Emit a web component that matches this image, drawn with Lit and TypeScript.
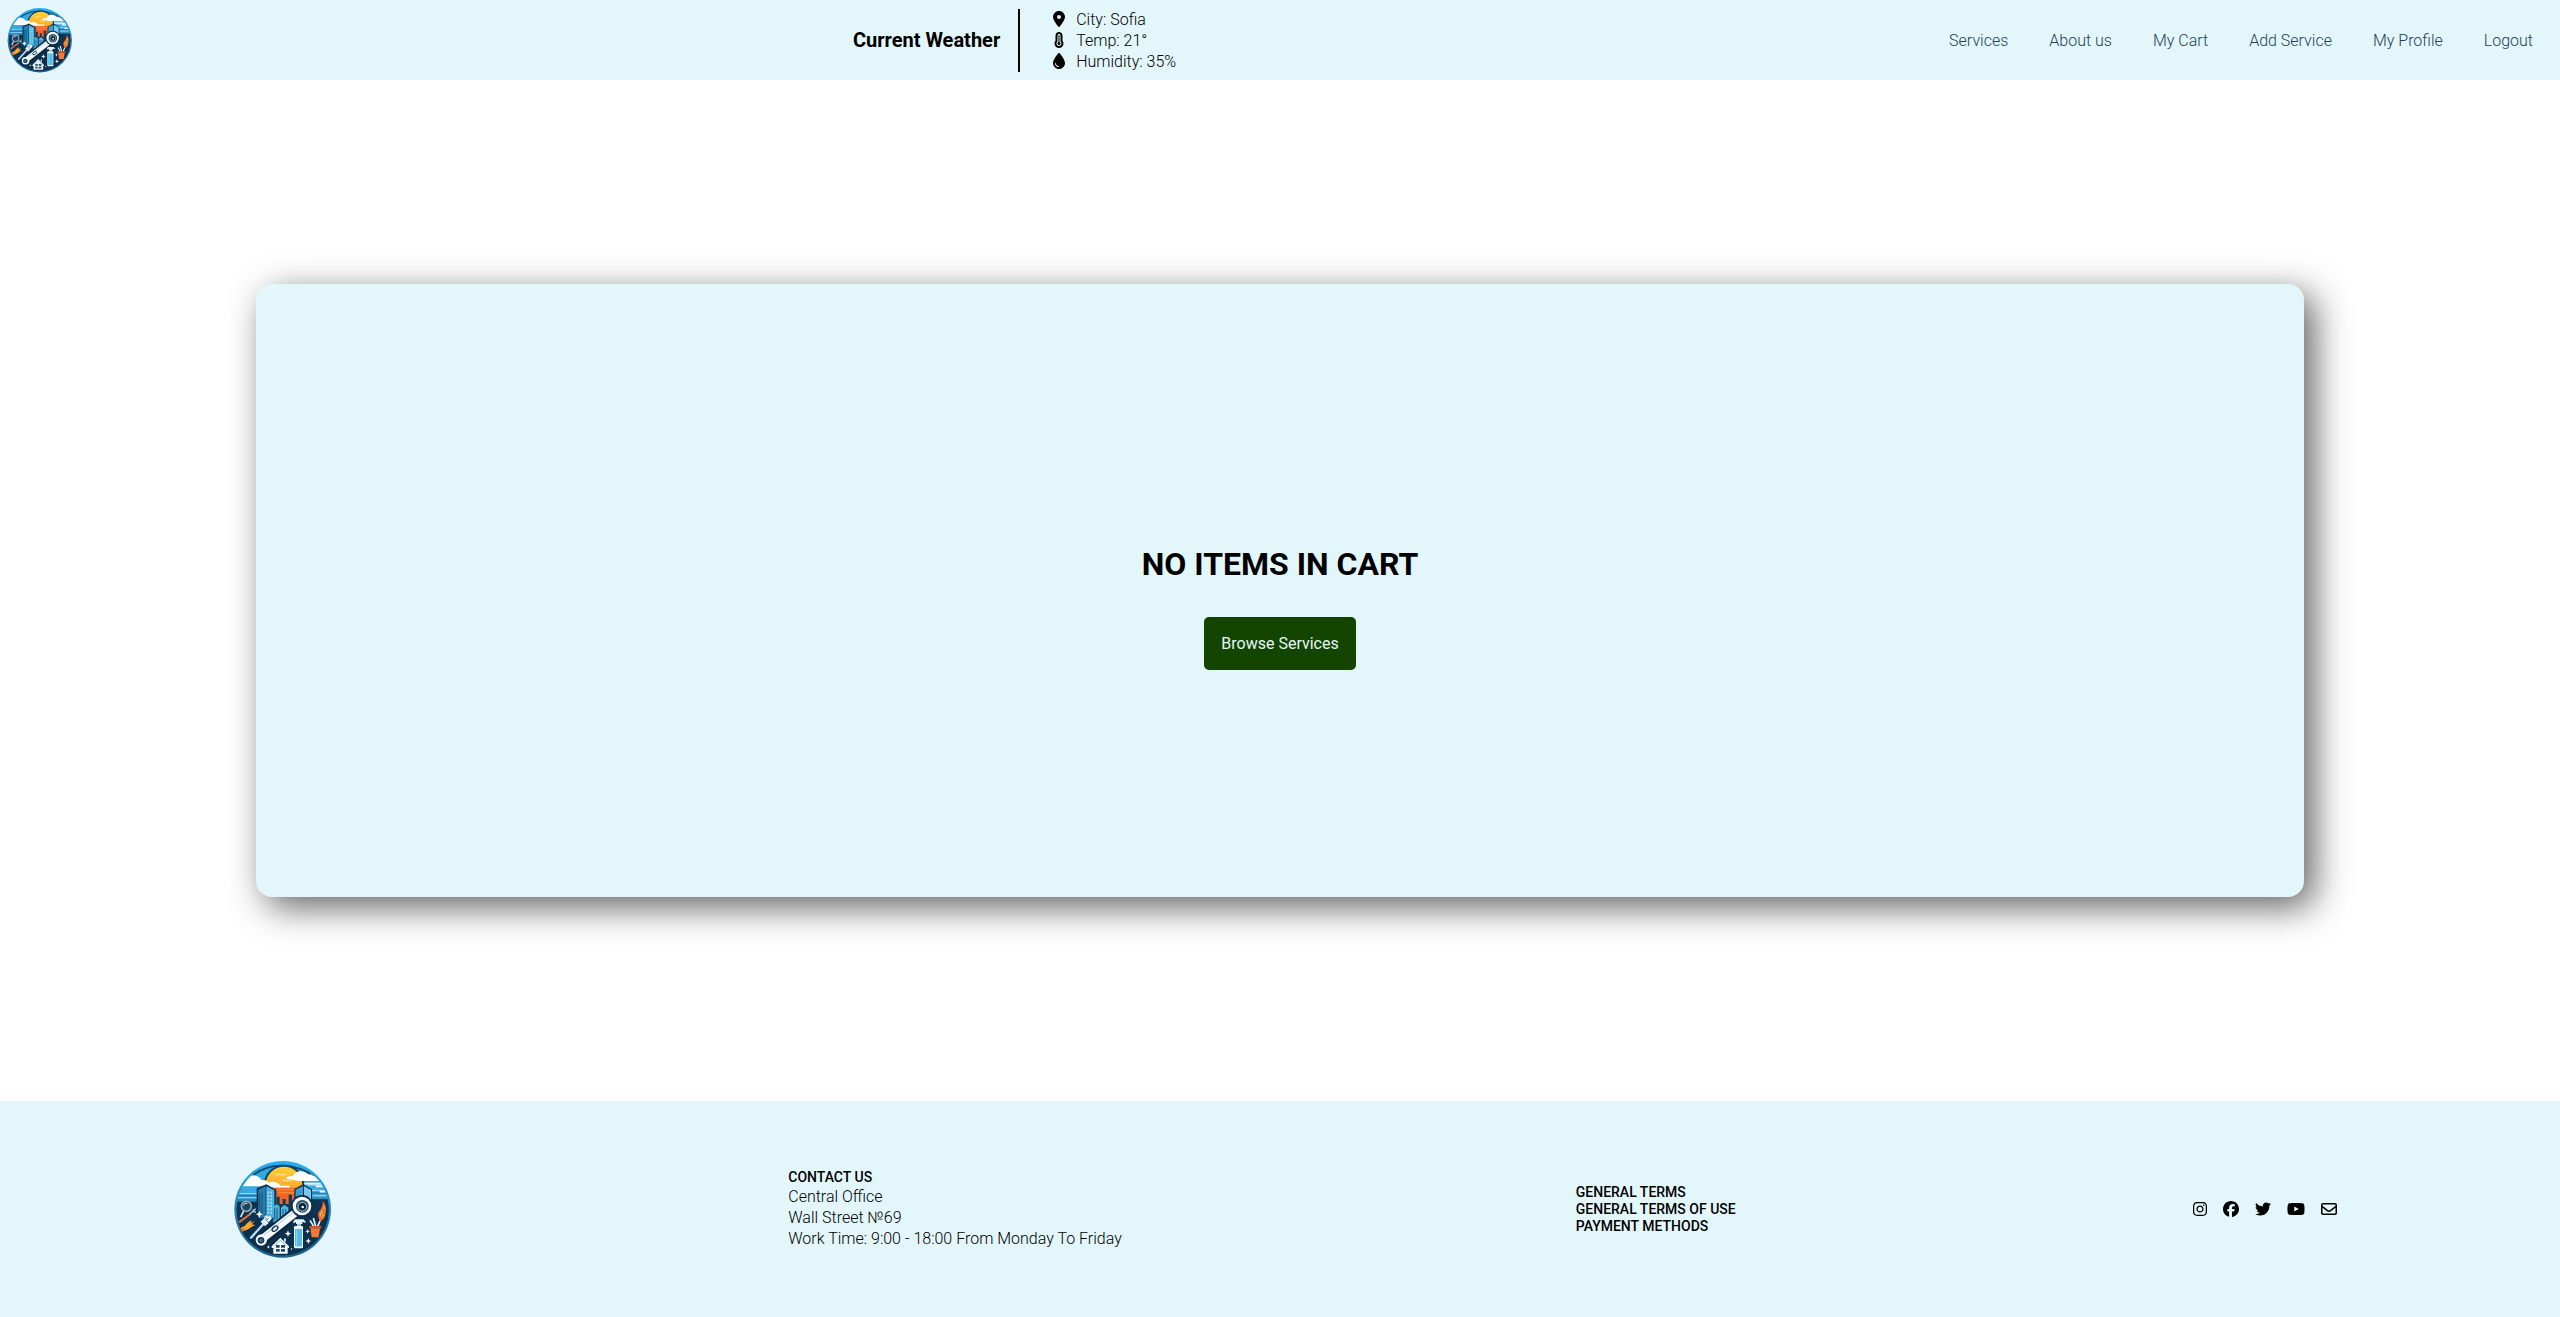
import { LitElement, html, css, svg } from "lit";
import { customElement, property } from "lit/decorators.js";

interface Glyph {
  width: number;
  path: string;
}

const glyphs: Record<string, Glyph> = {
  location: {
    width: 384,
    path: "M215.7 499.2C267 435 384 279.4 384 192C384 86 298 0 192 0S0 86 0 192c0 87.4 117 243 168.3 307.2c12.3 15.3 35.1 15.3 47.4 0zM192 128a64 64 0 1 1 0 128 64 64 0 1 1 0-128z",
  },
  temperature: {
    width: 320,
    path: "M160 64c-26.5 0-48 21.5-48 48l0 164.5c0 17.3-7.1 31.9-15.3 42.5C86.2 332.6 80 349.5 80 368c0 44.2 35.8 80 80 80s80-35.8 80-80c0-18.5-6.2-35.4-16.7-48.9c-8.2-10.6-15.3-25.2-15.3-42.5L208 112c0-26.5-21.5-48-48-48zM48 112C48 50.2 98.1 0 160 0s112 50.1 112 112l0 164.4c0 .1 .1 .3 .2 .6c.2 .6 .8 1.6 1.7 2.8c18.9 24.4 30.1 55 30.1 88.1c0 79.5-64.5 144-144 144S16 447.5 16 368c0-33.2 11.2-63.8 30.1-88.1c.9-1.2 1.5-2.2 1.7-2.8c.1-.3 .2-.5 .2-.6L48 112zM208 368c0 26.5-21.5 48-48 48s-48-21.5-48-48c0-20.9 13.4-38.7 32-45.3L144 112c0-8.8 7.2-16 16-16s16 7.2 16 16l0 210.7c18.6 6.6 32 24.4 32 45.3z",
  },
  droplet: {
    width: 384,
    path: "M192 512C86 512 0 426 0 320C0 228.8 130.2 57.7 166.6 11.7C172.6 4.2 181.5 0 191.1 0l1.8 0c9.6 0 18.5 4.2 24.5 11.7C253.8 57.7 384 228.8 384 320c0 106-86 192-192 192zM96 336c0-8.8-7.2-16-16-16s-16 7.2-16 16c0 61.9 50.1 112 112 112c8.8 0 16-7.2 16-16s-7.2-16-16-16c-44.2 0-80-35.8-80-80z",
  },
  instagram: {
    width: 448,
    path: "M224.1 141c-63.6 0-114.9 51.3-114.9 114.9s51.3 114.9 114.9 114.9S339 319.5 339 255.9 287.7 141 224.1 141zm0 189.6c-41.1 0-74.7-33.5-74.7-74.7s33.5-74.7 74.7-74.7 74.7 33.5 74.7 74.7-33.6 74.7-74.7 74.7zm146.4-194.3c0 14.9-12 26.8-26.8 26.8-14.9 0-26.8-12-26.8-26.8s12-26.8 26.8-26.8 26.8 12 26.8 26.8zm76.1 27.2c-1.7-35.9-9.9-67.7-36.2-93.9-26.2-26.2-58-34.4-93.9-36.2-37-2.1-147.9-2.1-184.9 0-35.8 1.7-67.6 9.9-93.9 36.1s-34.4 58-36.2 93.9c-2.1 37-2.1 147.9 0 184.9 1.7 35.9 9.9 67.7 36.2 93.9s58 34.4 93.9 36.2c37 2.1 147.9 2.1 184.9 0 35.9-1.7 67.7-9.9 93.9-36.2 26.2-26.2 34.4-58 36.2-93.9 2.1-37 2.1-147.8 0-184.8zM398.8 388c-7.8 19.6-22.9 34.7-42.6 42.6-29.5 11.7-99.5 9-132.1 9s-102.7 2.6-132.1-9c-19.6-7.8-34.7-22.9-42.6-42.6-11.7-29.5-9-99.5-9-132.1s-2.6-102.7 9-132.1c7.8-19.6 22.9-34.7 42.6-42.6 29.5-11.7 99.5-9 132.1-9s102.7-2.6 132.1 9c19.6 7.8 34.7 22.9 42.6 42.6 11.7 29.5 9 99.5 9 132.1s2.7 102.7-9 132.1z",
  },
  facebook: {
    width: 512,
    path: "M512 256C512 114.6 397.4 0 256 0S0 114.6 0 256C0 376 82.7 476.8 194.2 504.5V334.2H141.4V256h52.8V222.3c0-87.1 39.4-127.5 125-127.5c16.2 0 44.2 3.2 55.7 6.4V172c-6-.6-16.5-1-29.6-1c-42 0-58.2 15.9-58.2 57.2V256h83.6l-14.4 78.2H287V510.1C413.8 494.8 512 386.9 512 256z",
  },
  twitter: {
    width: 512,
    path: "M459.37 151.716c.325 4.548.325 9.097.325 13.645 0 138.72-105.583 298.558-298.558 298.558-59.452 0-114.68-17.219-161.137-47.106 8.447.974 16.568 1.299 25.34 1.299 49.055 0 94.213-16.568 130.274-44.832-46.132-.975-84.792-31.188-98.112-72.772 6.498.974 12.995 1.624 19.818 1.624 9.421 0 18.843-1.3 27.614-3.573-48.081-9.747-84.143-51.98-84.143-102.985v-1.299c13.969 7.797 30.214 12.67 47.431 13.319-28.264-18.843-46.781-51.005-46.781-87.391 0-19.492 5.197-37.36 14.294-52.954 51.655 63.675 129.3 105.258 216.365 109.807-1.624-7.797-2.599-15.918-2.599-24.04 0-57.828 46.782-104.934 104.934-104.934 30.213 0 57.502 12.67 76.67 33.137 23.715-4.548 46.456-13.32 66.599-25.34-7.798 24.366-24.366 44.833-46.132 57.827 21.117-2.273 41.584-8.122 60.426-16.243-14.292 20.791-32.161 39.308-52.628 54.253z",
  },
  youtube: {
    width: 576,
    path: "M549.655 124.083c-6.281-23.65-24.787-42.276-48.284-48.597C458.781 64 288 64 288 64S117.22 64 74.629 75.486c-23.497 6.322-42.003 24.947-48.284 48.597-11.412 42.867-11.412 132.305-11.412 132.305s0 89.438 11.412 132.305c6.281 23.65 24.787 41.5 48.284 47.821C117.22 448 288 448 288 448s170.78 0 213.371-11.486c23.497-6.321 42.003-24.171 48.284-47.821 11.412-42.867 11.412-132.305 11.412-132.305s0-89.438-11.412-132.305zm-317.51 213.508V175.185l142.739 81.205-142.739 81.201z",
  },
  envelope: {
    width: 512,
    path: "M64 112c-8.8 0-16 7.2-16 16v22.1L220.5 291.7c20.7 17 50.4 17 71.1 0L464 150.1V128c0-8.8-7.2-16-16-16H64zM48 212.2V384c0 8.8 7.2 16 16 16H448c8.8 0 16-7.2 16-16V212.2L322 328.8c-38.4 31.5-93.7 31.5-132 0L48 212.2zM0 128C0 92.7 28.7 64 64 64H448c35.3 0 64 28.7 64 64V384c0 35.3-28.7 64-64 64H64c-35.3 0-64-28.7-64-64V128z",
  },
};

@customElement("app-icon")
class AppIcon extends LitElement {
  @property() name = "";

  static styles = css`
    :host {
      display: block;
      height: 16px;
    }
    .glyph {
      display: block;
      height: 16px;
      width: auto;
      fill: currentColor;
    }
  `;

  render() {
    const glyph = glyphs[this.name];
    return html`<svg class="glyph" viewBox="0 0 ${glyph.width} 512" width=${glyph.width / 32} height="16" aria-hidden="true">
      <path d=${glyph.path}></path>
    </svg>`;
  }
}

const sparkle = (x: number, y: number, r: number) => svg`
  <path fill="#fff" d="M${x} ${y - r}L${x + r * 0.28} ${y - r * 0.28}L${x + r} ${y}L${x + r * 0.28} ${y + r * 0.28}L${x} ${y + r}L${x - r * 0.28} ${y + r * 0.28}L${x - r} ${y}L${x - r * 0.28} ${y - r * 0.28}Z"></path>`;

const windowGrid = (x: number, y: number, cols: number, rows: number) =>
  Array.from({ length: cols * rows }, (_, i) => svg`
    <rect x=${x + (i % cols) * 9} y=${y + Math.floor(i / cols) * 10} width="5" height="6" fill="#a5dcf3"></rect>`);

@customElement("app-logo")
class AppLogo extends LitElement {
  static styles = css`
    :host {
      display: block;
    }
    .art {
      display: block;
      width: 100%;
      height: auto;
    }
  `;

  render() {
    return html`<svg class="art" viewBox="0 0 360 360" role="img" aria-label="Home services">
      <defs>
        <clipPath id="disc"><circle cx="179" cy="181" r="138"></circle></clipPath>
        <linearGradient id="rim" x1="0" y1="0" x2="0" y2="1">
          <stop offset="0" stop-color="#27b0ee"></stop>
          <stop offset="0.45" stop-color="#2b86b9"></stop>
          <stop offset="1" stop-color="#1b5f8c"></stop>
        </linearGradient>
        <linearGradient id="sky" x1="0" y1="0" x2="0" y2="1">
          <stop offset="0" stop-color="#27aae8"></stop>
          <stop offset="0.34" stop-color="#3da9dc"></stop>
          <stop offset="0.55" stop-color="#0f3a5c"></stop>
          <stop offset="1" stop-color="#0c2d49"></stop>
        </linearGradient>
        <linearGradient id="sun" x1="0" y1="0" x2="0" y2="1">
          <stop offset="0" stop-color="#ffd23a"></stop>
          <stop offset="0.6" stop-color="#fca928"></stop>
          <stop offset="1" stop-color="#f06a26"></stop>
        </linearGradient>
      </defs>
      <rect width="360" height="360" fill="#e4f5fc"></rect>
      <circle cx="179" cy="181" r="145" fill="url(#rim)"></circle>
      <g clip-path="url(#disc)">
        <rect x="34" y="36" width="290" height="290" fill="url(#sky)"></rect>
        <path d="M84 84Q124 48 180 50T276 84" fill="none" stroke="#124a72" stroke-width="6"></path>
        <circle cx="183" cy="108" r="61" fill="#0f3f63"></circle>
        <path d="M30 134H110M34 146H104M255 108H330M262 124H330M270 140H330" stroke="#8fd2ee" stroke-width="4"></path>
        <path d="M30 140H106M262 132H330" stroke="#1f78ae" stroke-width="5"></path>
        <path d="M30 158H110L102 330H20ZM262 150H340V330H240Z" fill="#0e3452"></path>
        <path d="M30 152H96M270 149H330" stroke="#2c87b8" stroke-width="4"></path>
        <circle cx="183" cy="108" r="55" fill="url(#sun)"></circle>
        <path d="M132 116H236L222 190H150Z" fill="#f0642a"></path>
        <path d="M160 122H215M166 131H225" stroke="#fb8a2c" stroke-width="4"></path>
        <path d="M158 78q9-6 14 1q7-7 16-1M180 95q8-4 12 1q6-5 13 0" fill="none" stroke="#fff1ba" stroke-width="3"></path>
        <path d="M40 112C50 96 62 98 68 92C78 72 106 76 116 94C126 90 134 96 138 101C150 95 166 100 173 112Z" fill="#fff"></path>
        <path d="M190 86C196 80 204 82 210 82C216 64 244 62 254 76C266 74 272 82 280 84C292 86 298 90 302 96H230C220 96 214 92 190 90Z" fill="#fff"></path>
        <path d="M244 104H300M278 112H310M290 128H320M128 113H200" stroke="#fff" stroke-width="5"></path>
        <path d="M161 143h9v22h9v-15h9v15h9v-28h10v30h12v50h-70v-52h12z" fill="#123a59"></path>
        <path d="M101 118L130 106L160 122V214H101Z" fill="#0d3350"></path>
        <path d="M106 122L128 112V206H106Z" fill="#277eac"></path>
        <path d="M130 112L154 124V206H130Z" fill="#4db1dd"></path>
        <path d="M110 134v62M117 130v68" stroke="#145780" stroke-width="3"></path>
        ${windowGrid(133, 128, 2, 7)}
        <path d="M214 120L240 106L267 121V180H214Z" fill="#0d3350"></path>
        <path d="M218 122L240 111V176H218Z" fill="#3a9fd0"></path>
        <path d="M243 112L264 123V176H243Z" fill="#78c8e8"></path>
        <path d="M151 172L161 166L172 172V224H151Z" fill="#4aaedb"></path>
        <path d="M174 176L184 168L196 176V214H174Z" fill="#56b8e2"></path>
        <path d="M172 166V224" stroke="#0d3350" stroke-width="4"></path>
        <path d="M155 178v34M162 178v34M180 180v24M188 180v24" stroke="#155a85" stroke-width="3"></path>
        <path d="M30 220H106L150 222L200 196L330 206V330H30Z" fill="#0d304c"></path>
        <path d="M53 204L62 186" stroke="#e8eef2" stroke-width="5"></path>
        <circle cx="70" cy="172" r="15" fill="#1a4564" stroke="#8fa8b8" stroke-width="5"></circle>
        <path d="M61 170a10 10 0 0 1 12-7" fill="none" stroke="#d6e6ee" stroke-width="3"></path>
        <path d="M48 220L82 195" stroke="#e8703c" stroke-width="6"></path>
        <path d="M80 196L98 179M90 181l2 7l7 1" fill="none" stroke="#b7cbd7" stroke-width="4"></path>
        <path d="M46 240L66 230C70 224 76 218 86 213L82 221L95 217L86 226L97 228L85 234C76 244 64 242 54 252Z" fill="#ffa52c"></path>
        <path d="M46 246L64 240" stroke="#ed6830" stroke-width="6"></path>
        <path d="M84 266L124 222" stroke="#b9e1f1" stroke-width="7" stroke-linecap="round"></path>
        <path d="M113 218L124 207L137 222L126 232Z" fill="#dceffa"></path>
        <path d="M122 206L130 198L136 204L140 200L147 208L137 220Z" fill="#eef7fb"></path>
        <path d="M126 204l7 8M137 207l-8 8" stroke="#24597b" stroke-width="2"></path>
        <path d="M219 190L115 274" stroke="#082940" stroke-width="36" stroke-linecap="round"></path>
        <path d="M219 190L120 268" stroke="#f5f9fb" stroke-width="23"></path>
        <path d="M215 186L124 258" stroke="#c4d9e4" stroke-width="4"></path>
        <circle cx="115" cy="273" r="17" fill="#f5f9fb"></circle>
        <circle cx="114" cy="274" r="10" fill="#143d5b"></circle>
        <circle cx="114" cy="274" r="5" fill="#417995"></circle>
        <ellipse cx="156" cy="239" rx="10" ry="6" transform="rotate(-39 156 239)" fill="#e5f1f7" stroke="#143d5b" stroke-width="4"></ellipse>
        <circle cx="237" cy="171" r="33" fill="#0c2d49"></circle>
        <circle cx="237" cy="171" r="28" fill="#f7fafc"></circle>
        <circle cx="238" cy="172" r="19" fill="#1d4865"></circle>
        <circle cx="238" cy="173" r="13" fill="#0a2439" stroke="#8ca9b8" stroke-width="4"></circle>
        <circle cx="239" cy="174" r="4" fill="#eef5f8"></circle>
        <path d="M286 202C280 186 302 182 299 156C315 174 308 190 306 200C304 210 298 214 290 218Z" fill="#f26a2e"></path>
        <path d="M291 202C287 190 305 186 302 168C309 182 305 196 300 203Z" fill="#ffb536"></path>
        <path d="M294 200C303 194 303 187 303 180" fill="none" stroke="#0d304c" stroke-width="2"></path>
        <path d="M272 232L261 214M278 232L271 207M284 232L291 216" stroke="#e6f2f7" stroke-width="5"></path>
        <path d="M262 238H291L287 265H266Z" fill="#f47a34"></path>
        <rect x="259" y="231" width="36" height="7" fill="#d6552b"></rect>
        <path d="M216 211H241L249 219L246 221L238 218V225H219V219L212 223L210 219Z" fill="#e6f4fa"></path>
        <rect x="222" y="224" width="12" height="8" fill="#a9cadb"></rect>
        <rect x="213" y="231" width="27" height="67" rx="4" fill="#edf8fc"></rect>
        <rect x="216" y="240" width="21" height="52" fill="#55bcea"></rect>
        <path d="M221 242v48" stroke="#96dcf5" stroke-width="3"></path>
        <path d="M146 292L172 266L198 292V297H194V314H151V297H146Z" fill="#f5fafc"></path>
        <path d="M155 290L172 274L190 290" fill="none" stroke="#8bb4c8" stroke-width="3"></path>
        <rect x="159" y="288" width="27" height="20" fill="#1a4b6b"></rect>
        <path d="M172 288V308M159 298H186" stroke="#fff" stroke-width="4"></path>
        <rect x="183" y="268" width="6" height="10" fill="#c5dce7"></rect>
        ${sparkle(109, 196, 11)}${sparkle(195, 254, 10)}${sparkle(256, 276, 9)}
        ${sparkle(254, 247, 7)}${sparkle(136, 294, 5)}${sparkle(206, 300, 4)}
      </g>
    </svg>`;
  }
}

const navItems = ["Services", "About us", "My Cart", "Add Service", "My Profile", "Logout"];

const weather = [
  { icon: "location", text: "City: Sofia" },
  { icon: "temperature", text: "Temp: 21°" },
  { icon: "droplet", text: "Humidity: 35%" },
];

const terms = ["GENERAL TERMS", "GENERAL TERMS OF USE", "PAYMENT METHODS"];

const socials = ["instagram", "facebook", "twitter", "youtube", "envelope"];

@customElement("app-root")
class AppRoot extends LitElement {
  static styles = css`
    :host {
      display: flex;
      flex-direction: column;
      min-height: 100vh;
      background: #fff;
      color: #000;
      font-family: Roboto, "Liberation Sans", sans-serif;
      font-size: 16px;
      line-height: 21px;
    }
    a {
      color: inherit;
      text-decoration: none;
    }
    ul {
      list-style: none;
      margin: 0;
      padding: 0;
    }
    h1, h2, h3, p {
      margin: 0;
    }
    .header {
      display: flex;
      align-items: center;
      justify-content: space-between;
      background: #e3f7fb;
    }
    .header-logo {
      width: 80px;
    }
    .weather {
      display: flex;
      align-items: center;
    }
    .weather-title {
      font-size: 20px;
      font-weight: 700;
      padding-right: 18px;
    }
    .weather-list {
      border-left: 2px solid #000;
      padding-left: 32px;
    }
    .weather-row {
      display: flex;
      align-items: center;
      gap: 10px;
      font-weight: 300;
    }
    .weather-icon {
      display: flex;
      justify-content: center;
      width: 14px;
    }
    .nav-list {
      display: flex;
      gap: 41px;
      padding-right: 27px;
      color: #1d4257;
      font-weight: 300;
    }
    .main {
      flex: 1;
      display: grid;
      grid-template-columns: 1fr 8fr 1fr;
      grid-template-rows: 1fr 3fr 1fr;
    }
    .cart {
      grid-area: 2 / 2;
      display: flex;
      flex-direction: column;
      align-items: center;
      justify-content: center;
      background: #e3f7fb;
      border-radius: 16px;
      box-shadow: 10px 10px 36px rgba(0, 0, 0, 0.62);
    }
    .cart-title {
      margin: 32px 0;
      font-size: 32px;
      line-height: 42px;
      font-weight: 700;
    }
    .browse {
      padding: 16px 17px;
      border: 0;
      border-radius: 5px;
      background: #134400;
      color: #e3f7fb;
      font: inherit;
      cursor: pointer;
    }
    .footer {
      display: flex;
      align-items: center;
      justify-content: space-around;
      padding: 48px 0;
      background: #e3f7fb;
    }
    .footer-logo {
      width: 120px;
    }
    .contact {
      min-width: 342px;
      font-weight: 300;
    }
    .terms {
      min-width: 172px;
    }
    .small-title {
      font-size: 14px;
      line-height: 17px;
      font-weight: 500;
    }
    .socials {
      display: flex;
      gap: 16px;
    }
  `;

  render() {
    return html`
      <header class="header">
        <app-logo class="header-logo"></app-logo>
        <section class="weather">
          <h3 class="weather-title">Current Weather</h3>
          <ul class="weather-list">
            ${weather.map((row) => html`
              <li class="weather-row">
                <span class="weather-icon"><app-icon name=${row.icon}></app-icon></span>
                <span>${row.text}</span>
              </li>`)}
          </ul>
        </section>
        <nav>
          <ul class="nav-list">
            ${navItems.map((item) => html`<li><a href="#">${item}</a></li>`)}
          </ul>
        </nav>
      </header>
      <main class="main">
        <section class="cart">
          <h1 class="cart-title">NO ITEMS IN CART</h1>
          <button class="browse" type="button">Browse Services</button>
        </section>
      </main>
      <footer class="footer">
        <app-logo class="footer-logo"></app-logo>
        <section class="contact">
          <h2 class="small-title">CONTACT US</h2>
          <p>Central Office</p>
          <p>Wall Street №69</p>
          <p>Work Time: 9:00 - 18:00 From Monday To Friday</p>
        </section>
        <ul class="terms small-title">
          ${terms.map((item) => html`<li><a href="#">${item}</a></li>`)}
        </ul>
        <ul class="socials">
          ${socials.map((name) => html`<li><a href="#" aria-label=${name}><app-icon name=${name}></app-icon></a></li>`)}
        </ul>
      </footer>
    `;
  }
}
